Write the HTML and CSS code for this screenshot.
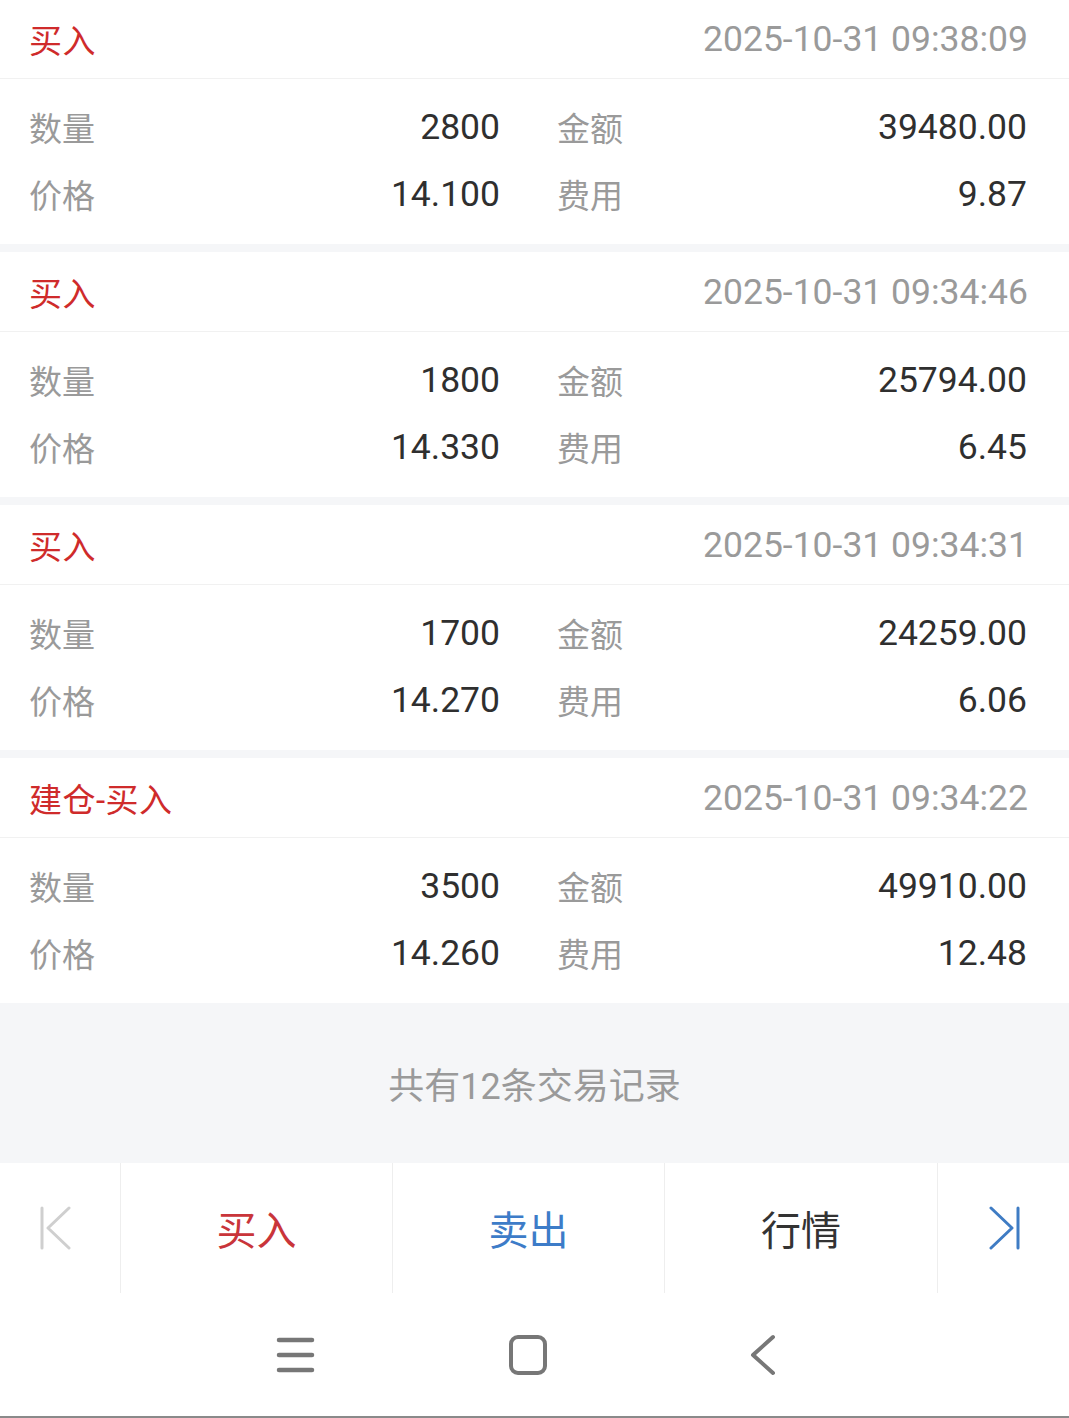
FILE: index.html
```
<!DOCTYPE html>
<html lang="zh-CN">
<head>
  <meta charset="UTF-8" />
  <meta name="viewport" content="width=device-width, initial-scale=1" />
  <title>交易记录</title>
  <link rel="stylesheet" href="styles.css">
</head>
<body>

  <div class="list">
    <div class="card first">
      <div class="card-head">
        <span class="kind">买入</span>
        <span class="time">2025-10-31 09:38:09</span>
      </div>
      <div class="card-body">
        <span class="label">数量</span><span class="value">2800</span>
        <span class="label">金额</span><span class="value">39480.00</span>
        <span class="label">价格</span><span class="value">14.100</span>
        <span class="label">费用</span><span class="value">9.87</span>
      </div>
    </div>

    <div class="card">
      <div class="card-head">
        <span class="kind">买入</span>
        <span class="time">2025-10-31 09:34:46</span>
      </div>
      <div class="card-body">
        <span class="label">数量</span><span class="value">1800</span>
        <span class="label">金额</span><span class="value">25794.00</span>
        <span class="label">价格</span><span class="value">14.330</span>
        <span class="label">费用</span><span class="value">6.45</span>
      </div>
    </div>

    <div class="card">
      <div class="card-head">
        <span class="kind">买入</span>
        <span class="time">2025-10-31 09:34:31</span>
      </div>
      <div class="card-body">
        <span class="label">数量</span><span class="value">1700</span>
        <span class="label">金额</span><span class="value">24259.00</span>
        <span class="label">价格</span><span class="value">14.270</span>
        <span class="label">费用</span><span class="value">6.06</span>
      </div>
    </div>

    <div class="card">
      <div class="card-head">
        <span class="kind">建仓-买入</span>
        <span class="time">2025-10-31 09:34:22</span>
      </div>
      <div class="card-body">
        <span class="label">数量</span><span class="value">3500</span>
        <span class="label">金额</span><span class="value">49910.00</span>
        <span class="label">价格</span><span class="value">14.260</span>
        <span class="label">费用</span><span class="value">12.48</span>
      </div>
    </div>
  </div>

  <div class="summary">共有12条交易记录</div>

  <div class="actions">
    <div class="action first-page">
      <svg width="34" height="44" viewBox="0 0 34 44" fill="none" stroke="#cfcfcf" stroke-width="3" stroke-linecap="round" stroke-linejoin="round">
        <path d="M3 2 V42" />
        <path d="M30 2 L9 22 L30 42" />
      </svg>
    </div>
    <div class="action buy">买入</div>
    <div class="action sell">卖出</div>
    <div class="action quote">行情</div>
    <div class="action">
      <svg width="34" height="44" viewBox="0 0 34 44" fill="none" stroke="#3f7cc4" stroke-width="3" stroke-linecap="round" stroke-linejoin="round">
        <path d="M31 2 V42" />
        <path d="M4 2 L25 22 L4 42" />
      </svg>
    </div>
  </div>

  <div class="navbar">
    <svg width="40" height="40" viewBox="0 0 40 40" stroke="#777" stroke-width="4.5" stroke-linecap="round">
      <path d="M3 5 H36" />
      <path d="M3 20 H36" />
      <path d="M3 35 H36" />
    </svg>
    <svg width="40" height="42" viewBox="0 0 40 42" fill="none" stroke="#777" stroke-width="4">
      <rect x="3" y="3" width="34" height="36" rx="7" />
    </svg>
    <svg width="30" height="42" viewBox="0 0 30 42" fill="none" stroke="#777" stroke-width="4" stroke-linecap="round" stroke-linejoin="round">
      <path d="M25 3 L5 21 L25 39" />
    </svg>
  </div>

</body>
</html>
```

FILE: styles.css
```
body {
  margin: 0;
  width: 1069px;
  height: 1418px;
  overflow: hidden;
  background: #fff;
  font-family: Roboto, "Noto Sans CJK SC", sans-serif;
}
.list {
  display: flex;
  flex-direction: column;
  gap: 8px;
  background: #f5f6f8;
}
.card {
  background: #fff;
}
.card.first {
  margin-top: -1px;
}
.card-head {
  height: 79px;
  display: flex;
  align-items: center;
  justify-content: space-between;
  padding: 0 41px 0 29px;
  border-bottom: 1px solid #f1f1f1;
}
.kind {
  color: #cf2b2b;
  font-size: 33px;
  letter-spacing: 0.5px;
}
.time {
  color: #9a9a9a;
  font-size: 35.5px;
}
.card-body {
  display: grid;
  grid-template-columns: 100px 371px 157px 370px;
  grid-auto-rows: 67px;
  align-items: center;
  padding: 14px 41px 17px 29px;
}
.label {
  color: #9a9a9a;
  font-size: 33px;
}
.card-body .label:nth-child(4n+3) {
  margin-left: 57px;
}
.value {
  color: #2f2f2f;
  font-size: 35.5px;
  text-align: right;
}
.summary {
  height: 160px;
  background: #f5f6f8;
  display: flex;
  align-items: center;
  justify-content: center;
  color: #9a9a9a;
  font-size: 36px;
}
.actions {
  height: 130px;
  display: grid;
  grid-template-columns: 120px 272px 272px 273px 1fr;
  background: #fff;
}
.action {
  display: flex;
  align-items: center;
  justify-content: center;
  font-size: 40px;
  border-left: 1px solid #eeeeee;
}
.action.first-page {
  border-left: none;
  padding-right: 8px;
}
.buy {
  color: #c9353a;
}
.sell {
  color: #3d7cc8;
}
.quote {
  color: #333;
}
.navbar {
  height: 125px;
  box-sizing: border-box;
  border-bottom: 2px solid #8a8a8a;
  display: flex;
  align-items: center;
  padding-left: 276px;
  gap: 192px;
}
.navbar svg:last-child {
  margin-left: 8px;
}
```
